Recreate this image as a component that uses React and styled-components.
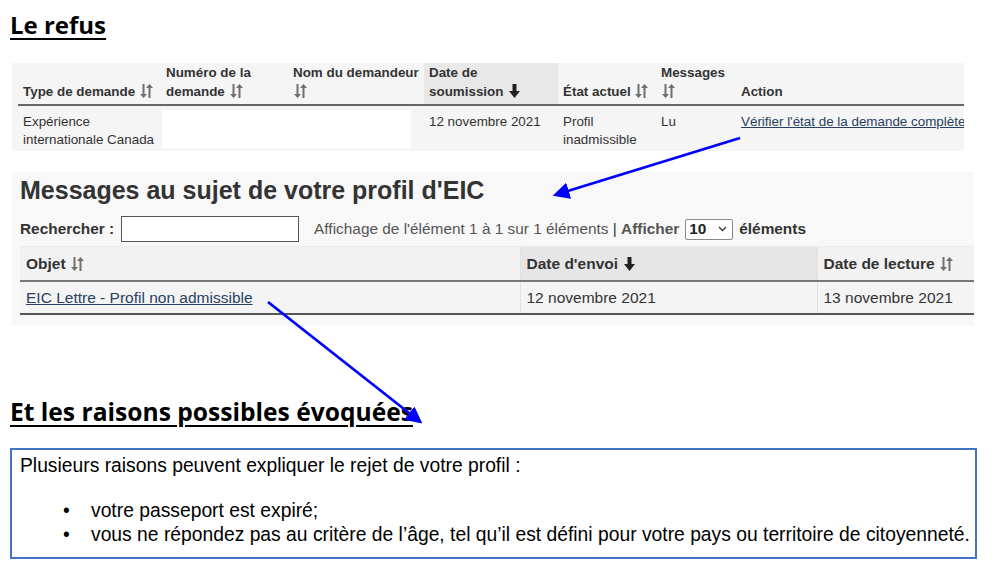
import styled, { createGlobalStyle } from 'styled-components';

const GlobalStyle = createGlobalStyle`
  html, body {
    margin: 0;
    padding: 0;
    background: #ffffff;
  }
  body {
    font-family: 'Liberation Sans', Arial, sans-serif;
    color: #333;
  }
`;

const SortIcon = () => (
  <SortSvg viewBox="0 0 12 14" width="13" height="14">
    <path d="M2 0h2v10h2.5L3 14 -0.5 10H2z" fill="#6f6f6f" />
    <path d="M8 14h2V4h2.5L9 0 5.5 4H8z" fill="#6f6f6f" />
  </SortSvg>
);

const DownIcon = () => (
  <SortSvg viewBox="0 0 12 14" width="13" height="14">
    <path d="M4 0h4v7h3.5L6 14 0.5 7H4z" fill="#222" />
  </SortSvg>
);

const Arrows = () => (
  <Overlay viewBox="0 0 1002 579" width="1002" height="579">
    <defs>
      <marker id="head" markerWidth="6" markerHeight="6" refX="4" refY="3" orient="auto" markerUnits="strokeWidth">
        <path d="M0 0L6 3L0 6z" fill="#0000ff" />
      </marker>
    </defs>
    <line x1="740" y1="138" x2="558" y2="194" stroke="#0000ff" strokeWidth="2.8" markerEnd="url(#head)" />
    <line x1="268" y1="302" x2="418" y2="420" stroke="#0000ff" strokeWidth="2.8" markerEnd="url(#head)" />
  </Overlay>
);

const App = () => {
  return (
    <Page>
      <GlobalStyle />
      <Heading>Le refus</Heading>
      <RequestPanel>
        <RequestTable>
          <colgroup>
            <col style={{ width: 143 }} />
            <col style={{ width: 127 }} />
            <col style={{ width: 136 }} />
            <col style={{ width: 134 }} />
            <col style={{ width: 98 }} />
            <col style={{ width: 80 }} />
            <col />
          </colgroup>
          <thead>
            <tr>
              <Th>
                Type de demande <SortIcon />
              </Th>
              <Th>
                Numéro de la
                <br />
                demande <SortIcon />
              </Th>
              <Th>
                Nom du demandeur
                <br />
                <SortIcon />
              </Th>
              <Th $sorted>
                Date de
                <br />
                soumission <DownIcon />
              </Th>
              <Th>
                État actuel <SortIcon />
              </Th>
              <Th>
                Messages
                <br />
                <SortIcon />
              </Th>
              <Th>Action</Th>
            </tr>
          </thead>
          <tbody>
            <tr>
              <Td>Expérience internationale Canada</Td>
              <RedactedCell colSpan={2}>
                <Redacted />
              </RedactedCell>
              <Td>12 novembre 2021</Td>
              <Td>Profil inadmissible</Td>
              <Td>Lu</Td>
              <Td $nowrap>
                <TableLink href="#">Vérifier l'état de la demande complète</TableLink>
              </Td>
            </tr>
          </tbody>
        </RequestTable>
      </RequestPanel>

      <MessagesPanel>
        <PanelTitle>Messages au sujet de votre profil d'EIC</PanelTitle>
        <Toolbar>
          <Bold>Rechercher :</Bold>
          <SearchInput type="text" />
          <Info>
            Affichage de l'élément 1 à 1 sur 1 éléments <Pipe>|</Pipe> <Bold>Afficher</Bold>
          </Info>
          <Select>
            10
            <svg width="9" height="6" viewBox="0 0 9 6">
              <path d="M1 1l3.5 3.5L8 1" stroke="#333" strokeWidth="1.3" fill="none" />
            </svg>
          </Select>
          <Bold>éléments</Bold>
        </Toolbar>
        <MessageTable>
          <colgroup>
            <col style={{ width: 500 }} />
            <col style={{ width: 297 }} />
            <col />
          </colgroup>
          <thead>
            <tr>
              <MTh>
                Objet <SortIcon />
              </MTh>
              <MTh $sorted>
                Date d'envoi <DownIcon />
              </MTh>
              <MTh>
                Date de lecture <SortIcon />
              </MTh>
            </tr>
          </thead>
          <tbody>
            <tr>
              <MTd>
                <TableLink href="#">EIC Lettre - Profil non admissible</TableLink>
              </MTd>
              <MTd>12 novembre 2021</MTd>
              <MTd>13 novembre 2021</MTd>
            </tr>
          </tbody>
        </MessageTable>
      </MessagesPanel>

      <Heading $second>Et les raisons possibles évoquées</Heading>
      <ReasonBox>
        <p>Plusieurs raisons peuvent expliquer le rejet de votre profil :</p>
        <ReasonList>
          <li>votre passeport est expiré;</li>
          <li>vous ne répondez pas au critère de l’âge, tel qu’il est défini pour votre pays ou territoire de citoyenneté.</li>
        </ReasonList>
      </ReasonBox>
      <Arrows />
    </Page>
  );
};

const Page = styled.div`
  position: relative;
  width: 1002px;
  height: 579px;
  overflow: hidden;
  padding-top: 9px;
  box-sizing: border-box;
`;

const Heading = styled.h1`
  margin: ${(p) => (p.$second ? '70px 0 0 10px' : '0 0 0 10px')};
  font-family: 'Open Sans', 'Noto Sans', sans-serif;
  font-weight: 700;
  font-size: ${(p) => (p.$second ? '24.6px' : '24px')};
  line-height: 32px;
  color: #000;
  text-decoration: underline;
  text-decoration-thickness: 2px;
  text-underline-offset: 4px;
`;

const RequestPanel = styled.div`
  margin: 22px 0 0 12px;
  width: 952px;
  background: #f5f5f5;
  padding-left: 6px;
  box-sizing: border-box;
`;

const RequestTable = styled.table`
  width: 100%;
  border-collapse: collapse;
  table-layout: fixed;
  font-size: 13.4px;
  color: #333;
`;

const Th = styled.th`
  text-align: left;
  vertical-align: bottom;
  font-weight: 700;
  line-height: 19px;
  padding: 0 5px 3px;
  height: 42px;
  box-sizing: border-box;
  border-bottom: 2px solid #666;
  white-space: nowrap;
  background: ${(p) => (p.$sorted ? '#e8e8e8' : 'transparent')};
`;

const Td = styled.td`
  vertical-align: top;
  line-height: 18px;
  padding: 7px 5px 2px;
  height: 45px;
  box-sizing: border-box;
  white-space: ${(p) => (p.$nowrap ? 'nowrap' : 'normal')};
  overflow: hidden;
`;

const RedactedCell = styled.td`
  padding: 4px 13px 3px 1px;
  vertical-align: top;
`;

const Redacted = styled.div`
  background: #ffffff;
  height: 38px;
`;

const TableLink = styled.a`
  color: #284162;
  text-decoration: underline;
`;

const SortSvg = styled.svg`
  display: inline-block;
  vertical-align: -2px;
  margin-left: 1px;
`;

const MessagesPanel = styled.div`
  margin: 21px 0 0 12px;
  width: 962px;
  background: #f8f8f8;
  padding: 4px 0 11px 8px;
  box-sizing: border-box;
`;

const PanelTitle = styled.h2`
  margin: 0;
  font-size: 25px;
  line-height: 28px;
  font-weight: 700;
  color: #333;
`;

const Toolbar = styled.div`
  display: flex;
  align-items: center;
  margin-top: 11px;
  height: 28px;
  font-size: 15.4px;
  color: #333;
`;

const Bold = styled.span`
  font-weight: 700;
`;

const SearchInput = styled.input`
  width: 178px;
  height: 26px;
  box-sizing: border-box;
  margin: 0 15px 0 7px;
  border: 1px solid #555;
  background: #fff;
  padding: 0 4px;
`;

const Info = styled.span`
  color: #555;
  margin-right: 4px;
`;

const Pipe = styled.span`
  color: #333;
`;

const Select = styled.span`
  display: inline-flex;
  align-items: center;
  justify-content: space-between;
  width: 48px;
  height: 21px;
  box-sizing: border-box;
  padding: 0 5px 0 3px;
  margin: 0 6px 0 2px;
  border: 1px solid #888;
  border-radius: 2px;
  background: #fff;
  font-weight: 700;
  color: #222;
`;

const MessageTable = styled.table`
  margin-top: 3px;
  width: 954px;
  border-collapse: collapse;
  table-layout: fixed;
  font-size: 15.5px;
  color: #333;
`;

const MTh = styled.th`
  text-align: left;
  font-weight: 700;
  height: 33px;
  padding: 0 6px;
  border-top: 1px solid #ececec;
  border-left: 1px solid #e2e2e2;
  border-bottom: 2px solid #777;
  white-space: nowrap;
  background: ${(p) => (p.$sorted ? '#e6e6e6' : '#f2f2f2')};
  &:first-child {
    border-left: none;
  }
`;

const MTd = styled.td`
  height: 31px;
  padding: 0 6px;
  border-left: 1px solid #e2e2e2;
  border-bottom: 2px solid #555;
  background: #f4f4f4;
  white-space: nowrap;
  &:first-child {
    border-left: none;
  }
`;

const ReasonBox = styled.div`
  margin: 20px 0 0 10px;
  width: 967px;
  height: 111px;
  box-sizing: border-box;
  border: 2px solid #4472c4;
  padding: 4px 8px;
  font-family: 'Liberation Sans', Arial, sans-serif;
  font-size: 19.3px;
  line-height: 24px;
  color: #000;
  p {
    margin: 0 0 21px;
  }
`;

const ReasonList = styled.ul`
  margin: 0;
  padding-left: 71px;
  list-style: none;
  li {
    position: relative;
    white-space: nowrap;
  }
  li::before {
    content: '•';
    position: absolute;
    left: -28px;
  }
`;

const Overlay = styled.svg`
  position: absolute;
  left: 0;
  top: 0;
  pointer-events: none;
`;

export default App;
